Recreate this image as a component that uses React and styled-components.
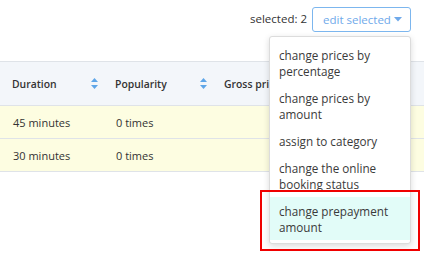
import styled, { createGlobalStyle } from "styled-components";

const GlobalStyle = createGlobalStyle`
    body {
        margin: 0;
        background: #ffffff;
        font-family: "Open Sans", "Liberation Sans", sans-serif;
        font-size: 12px;
        color: #333333;
    }
`;

const Page = styled.div`
    width: 424px;
    height: 256px;
    overflow: hidden;
    display: flex;
    flex-direction: column;
`;

// selected: 2 + edit selected 버튼
const Toolbar = styled.div`
    height: 61px;
    box-sizing: border-box;
    padding: 7px 13px 0 0;
    display: flex;
    justify-content: flex-end;
    align-items: flex-start;
    gap: 5px;
    font-size: 11.5px;
`;

const SelectedCount = styled.span`
    line-height: 24px;
    color: #333;
`;

const DropdownWrap = styled.div`
    position: relative;
`;

const EditButton = styled.button`
    height: 25px;
    width: 99px;
    box-sizing: border-box;
    padding: 0 8px 0 10px;
    display: flex;
    align-items: center;
    justify-content: space-between;
    border: 1px solid #7cb6ee;
    border-radius: 3px;
    background: #fff;
    color: #6fa9ea;
    font-family: inherit;
    font-size: 11.5px;
    cursor: pointer;
`;

const Menu = styled.ul`
    position: absolute;
    top: 29px;
    right: 0;
    width: 142px;
    box-sizing: border-box;
    margin: 0;
    padding: 4px 0 3px;
    list-style: none;
    background: #fff;
    border: 1px solid #dcdcdc;
    border-radius: 3px;
    box-shadow: 0 2px 6px rgba(0, 0, 0, 0.15);
    z-index: 2;
    font-size: 11.7px;
`;

const MenuItem = styled.li`
    position: relative;
    padding: 5.5px 9px;
    line-height: 16px;
    color: #3a3a3a;
    background: ${(p) => (p.$active ? "#e2fcf8" : "transparent")};
`;

const Highlight = styled.div`
    position: absolute;
    left: -10px;
    right: -10px;
    top: -7px;
    bottom: -11px;
    border: 2px solid #f00000;
`;

const Table = styled.div`
    display: grid;
    grid-template-columns: 103px 109px 1fr;
    font-size: 11px;
`;

const HeadCell = styled.div`
    height: 43px;
    border-top: 1px solid #dfe3e8;
    border-bottom: 1px solid #dfe3e8;
    background: #f3f6fa;
    padding: 0 5px 0 12px;
    display: flex;
    align-items: center;
    justify-content: space-between;
    font-size: 10.4px;
    font-weight: 600;
    color: #333;
    white-space: nowrap;
`;

const Cell = styled.div`
    height: 32px;
    border-bottom: 1px solid #dfe3e8;
    background: #fdfde1;
    padding: 0 13px;
    display: flex;
    align-items: center;
    color: #333;
`;

function SortIcon() {
    return (
        <svg width="7" height="11" viewBox="0 0 7 11">
            <path d="M3.5 0 L7 4 L0 4 Z" fill="#5ea6e8" />
            <path d="M3.5 11 L7 7 L0 7 Z" fill="#5ea6e8" />
        </svg>
    );
}

function Caret() {
    return (
        <svg width="8" height="5" viewBox="0 0 8 5">
            <path d="M0 0 L8 0 L4 4.5 Z" fill="#6fa9ea" />
        </svg>
    );
}

const menuItems = [
    "change prices by percentage",
    "change prices by amount",
    "assign to category",
    "change the online booking status",
    "change prepayment amount",
];

const rows = [
    ["45 minutes", "0 times"],
    ["30 minutes", "0 times"],
];

function App() {
    return (
        <Page>
            <GlobalStyle />
            <Toolbar>
                <SelectedCount>selected: 2</SelectedCount>
                <DropdownWrap>
                    <EditButton>
                        edit selected
                        <Caret />
                    </EditButton>
                    <Menu>
                        {menuItems.map((text, i) => {
                            const last = i === menuItems.length - 1;
                            return (
                                <MenuItem key={text} $active={last}>
                                    {text}
                                    {last && <Highlight />}
                                </MenuItem>
                            );
                        })}
                    </Menu>
                </DropdownWrap>
            </Toolbar>

            <Table>
                <HeadCell>
                    Duration
                    <SortIcon />
                </HeadCell>
                <HeadCell>
                    Popularity
                    <SortIcon />
                </HeadCell>
                <HeadCell>Gross price</HeadCell>
                {rows.map((row, i) => [
                    <Cell key={i + "a"}>{row[0]}</Cell>,
                    <Cell key={i + "b"}>{row[1]}</Cell>,
                    <Cell key={i + "c"} />,
                ])}
            </Table>
        </Page>
    );
}

export default App;
